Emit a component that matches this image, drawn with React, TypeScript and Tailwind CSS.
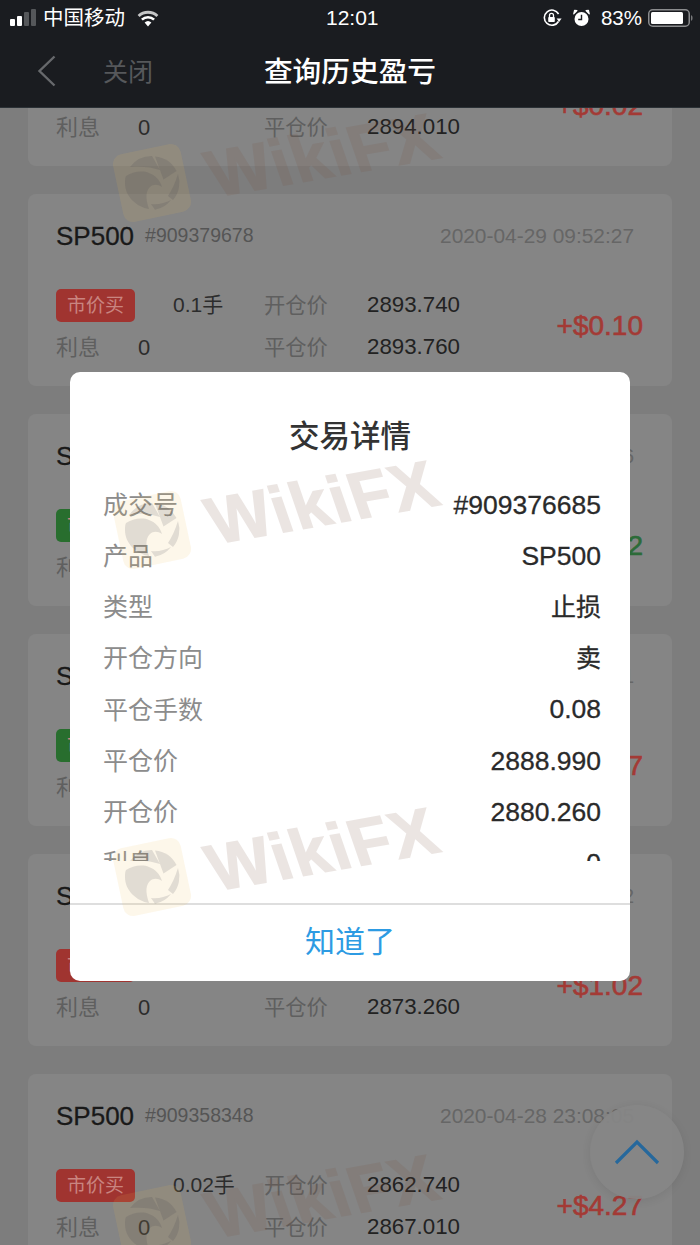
const cards = [
  { id: "#909380012", date: "2020-04-29 10:01:33", tag: "市价买", green: false, down: false, qty: "0.1手", open: "2893.990", close: "2894.010", profit: "+$0.02" },
  { id: "#909379678", date: "2020-04-29 09:52:27", tag: "市价买", green: false, down: false, qty: "0.1手", open: "2893.740", close: "2893.760", profit: "+$0.10" },
  { id: "#909376685", date: "2020-04-29 09:31:16", tag: "市价卖", green: true, down: true, qty: "0.08手", open: "2880.260", close: "2888.990", profit: "-$6.72" },
  { id: "#909371204", date: "2020-04-29 08:47:51", tag: "市价卖", green: true, down: false, qty: "0.05手", open: "2875.100", close: "2870.560", profit: "+$2.27" },
  { id: "#909365530", date: "2020-04-29 00:12:42", tag: "市价买", green: false, down: false, qty: "0.1手", open: "2872.240", close: "2873.260", profit: "+$1.02" },
  { id: "#909358348", date: "2020-04-28 23:08:05", tag: "市价买", green: false, down: false, qty: "0.02手", open: "2862.740", close: "2867.010", profit: "+$4.27" },
];

const details = [
  ["成交号", "#909376685"],
  ["产品", "SP500"],
  ["类型", "止损"],
  ["开仓方向", "卖"],
  ["平仓手数", "0.08"],
  ["平仓价", "2888.990"],
  ["开仓价", "2880.260"],
  ["利息", "0"],
];

function Signal() {
  return (
    <svg width="28" height="18" viewBox="0 0 28 18" className="ml-[10px]">
      <rect x="0" y="10" width="5" height="7" rx="1" fill="#fff" />
      <rect x="7" y="7" width="5" height="10" rx="1" fill="#fff" />
      <rect x="14" y="3" width="5" height="14" rx="1" fill="#55575a" />
      <rect x="21" y="0" width="5" height="17" rx="1" fill="#55575a" />
    </svg>
  );
}

function Wifi() {
  return (
    <svg width="22" height="17" viewBox="0 0 22 17" className="ml-[12px]">
      <path d="M11 16.500 7.600 12.600a5 5 0 0 1 6.800 0z" fill="#fff" />
      <path d="M5.800 10.600 4 8.700a10.400 10.400 0 0 1 14 0l-1.800 1.900a7.800 7.800 0 0 0-10.400 0z" fill="#fff" />
      <path d="M2.600 7 .6 4.900a15.400 15.400 0 0 1 20.800 0L19.400 7A12.600 12.600 0 0 0 2.600 7z" fill="#fff" opacity="0.75" />
    </svg>
  );
}

function RotationLock() {
  return (
    <svg width="19" height="18" viewBox="0 0 19 18">
      <path d="M15.500 12.500A7.600 7.600 0 1 1 15.600 5" fill="none" stroke="#fff" strokeWidth="1.600" />
      <path d="M13.600 9.500h5l-2.500 3.400z" fill="#fff" />
      <rect x="5.200" y="8" width="6.600" height="5" rx="0.800" fill="#fff" />
      <path d="M6.500 8V6.400a2 2 0 0 1 4 0V8" fill="none" stroke="#fff" strokeWidth="1.300" />
    </svg>
  );
}

function Alarm() {
  return (
    <svg width="17" height="18" viewBox="0 0 18 18">
      <circle cx="9" cy="10" r="7.400" fill="#fff" />
      <path d="M9 5.500V10.500H5.500" fill="none" stroke="#1a1c20" strokeWidth="1.500" />
      <path d="M.8 4.600 4.200 1.200 1.600.9zM17.200 4.600 13.800 1.200 16.400.9z" fill="#fff" stroke="#fff" strokeWidth="1.200" strokeLinejoin="round" />
    </svg>
  );
}

function Battery() {
  return (
    <svg width="46" height="18" viewBox="0 0 46 18" className="ml-[6px]">
      <rect x="0.750" y="0.750" width="40.500" height="16.500" rx="4" fill="none" stroke="#8b8c8e" strokeWidth="1.500" />
      <rect x="3" y="3" width="32" height="12" rx="1.500" fill="#fff" />
      <path d="M43 6v6a3 3 0 0 0 1.600-3A3 3 0 0 0 43 6z" fill="#77787a" />
    </svg>
  );
}

function TradeCard({ card }: { card: (typeof cards)[number] }) {
  return (
    <div className="h-[192px] shrink-0 rounded-lg bg-[#858585] pl-7 pt-6">
      <div className="flex h-9 items-center justify-between pr-[38px]">
        <div className="flex items-center">
          <span className="text-[26px] text-[#191919] [-webkit-text-stroke:0.3px]">SP500</span>
          <span className="ml-[11px] text-[19.500px] text-[#555]">{card.id}</span>
        </div>
        <span className="text-[20.900px] text-[#666]">{card.date}</span>
      </div>
      <div className="mt-[30px] flex items-center justify-between pr-[29px]">
        <div className="w-[430px]">
          <div className="grid h-[42px] grid-cols-[117px_91px_103px_1fr] items-center">
            <span
              className={`flex h-[33px] w-[79px] items-center justify-center rounded-[5px] pt-[2px] text-[19px] text-[#c98580] ${
                card.green ? "bg-[#286e2e]" : "bg-[#a03430]"
              }`}
            >
              {card.tag}
            </span>
            <span className="text-[21px] text-[#2c2c2c]">{card.qty}</span>
            <span className="translate-y-[2px] text-[21.300px] text-[#5f5f5f]">开仓价</span>
            <span className="text-[22.300px] text-[#222]">{card.open}</span>
          </div>
          <div className="grid h-[42px] grid-cols-[82px_126px_103px_1fr] items-center">
            <span className="text-[22px] text-[#5f5f5f]">利息</span>
            <span className="text-[22px] text-[#2c2c2c]">0</span>
            <span className="translate-y-[2px] text-[21.300px] text-[#5f5f5f]">平仓价</span>
            <span className="text-[22.300px] text-[#222]">{card.close}</span>
          </div>
        </div>
        <span className={`text-[28px] [-webkit-text-stroke:0.6px] ${card.down ? "text-[#2c6b38]" : "text-[#a33a35]"}`}>{card.profit}</span>
      </div>
    </div>
  );
}

function EagleLogo() {
  return (
    <svg width="80" height="80" viewBox="0 0 80 80" className="shrink-0">
      <rect x="5.500" y="5.500" width="69" height="69" rx="10" transform="rotate(-12 40 40)" fill="rgba(235,190,80,0.12)" />
      <g fill="rgba(60,60,70,0.14)">
        <path d="M18 24A27 27 0 0 1 40 13L48 27C40 24 29 23 18 24Z" />
        <path d="M43 13.500A27 27 0 0 1 64.500 28L51.500 36.500Z" />
        <path d="M66 31A27 27 0 0 1 61 57L56 53C60 47 63 40 66 31Z" />
        <path d="M39 61C46 62 53 60 59 57A27 27 0 0 1 43 66.800Z" />
        <path d="M14 33C20 29 30 27 37 30 43 32 48 37 50 44 46 41 41 41 38 44 34 48 33 54 37 66 25 64 13 54 13 40 13 37 13 35 14 33Z" />
      </g>
    </svg>
  );
}

function Watermark() {
  return (
    <div className="flex h-[347px] shrink-0 items-start pl-[112px]">
      <EagleLogo />
      <span className="ml-[15px] mt-[-28px] text-[66px] leading-[80px] font-bold tracking-[2px] text-[#784f3c] opacity-[0.14] [-webkit-text-stroke:1.5px] [transform:rotate(-10deg)_skewX(9deg)]">
        WikiFX
      </span>
    </div>
  );
}

export default function App() {
  return (
    <div className="relative flex h-[1245px] w-[700px] flex-col overflow-hidden bg-[#7d7d7d] font-['Liberation_Sans','Noto_Sans_CJK_SC',sans-serif]">
      <header className="relative z-10 h-[108px] shrink-0 border-b border-[#2b3136] bg-[#1a1c20]">
        <div className="relative flex h-9 items-center text-white">
          <Signal />
          <span className="ml-[5px] text-[20.500px] leading-none">中国移动</span>
          <Wifi />
          <span className="absolute left-[326px] -translate-y-px text-[21px] leading-none">12:01</span>
          <div className="ml-auto flex items-center gap-[11px] pr-[6px]">
            <RotationLock />
            <Alarm />
            <div className="flex items-center">
              <span className="text-[20.500px] leading-none">83%</span>
              <Battery />
            </div>
          </div>
        </div>
        <div className="relative flex h-[71px] items-center justify-center pt-[3px]">
          <svg width="20" height="32" viewBox="0 0 20 32" className="absolute left-[37px] top-[19px]">
            <path d="M17.500 1.500 2.500 16l15 14.500" fill="none" stroke="#67696c" strokeWidth="2.400" />
          </svg>
          <span className="absolute left-[103px] text-[25px] text-[#56585b]">关闭</span>
          <span className="text-[28.700px] font-medium text-white">查询历史盈亏</span>
        </div>
      </header>

      <main className="-mt-[134px] flex flex-col gap-7 px-7">
        {cards.map((card) => (
          <TradeCard key={card.id} card={card} />
        ))}
      </main>

      <button
        type="button"
        className="absolute bottom-[46px] right-4 flex h-[94px] w-[94px] items-center justify-center rounded-full bg-[#868686]/95 shadow-[0_2px_10px_rgba(0,0,0,0.08)]"
      >
        <svg width="46" height="26" viewBox="0 0 46 26">
          <path d="M2 24 23 3l21 21" fill="none" stroke="#26689c" strokeWidth="3.200" />
        </svg>
      </button>

      <div className="absolute inset-x-0 bottom-0 top-[108px] flex items-center justify-center">
        <div className="flex h-[609px] w-[560px] flex-col rounded-[10px] bg-white">
          <h2 className="pt-[44px] text-center text-[30.500px] leading-10 font-medium text-[#333]">交易详情</h2>
          <div className="mb-[42px] mt-[24px] h-[381px] overflow-hidden pl-[33px] pr-[29px]">
            {details.map(([label, value]) => (
              <div key={label} className="flex h-[51.200px] items-center justify-between">
                <span className="text-[25px] text-[#8c8c8c]">{label}</span>
                <span className={`text-[#2a2a2a] [-webkit-text-stroke:0.3px] ${/^[\x00-\x7f]+$/.test(value) ? "text-[26.500px]" : "text-[25px]"}`}>
                  {value}
                </span>
              </div>
            ))}
          </div>
          <button type="button" className="h-[78px] border-t-2 border-[#dedede] pb-[3px] text-[30px] text-[#2d9be3]">
            知道了
          </button>
        </div>
      </div>

      <div className="pointer-events-none absolute inset-0 z-20 flex flex-col pt-[143px]">
        <Watermark />
        <Watermark />
        <Watermark />
        <Watermark />
      </div>
    </div>
  );
}
